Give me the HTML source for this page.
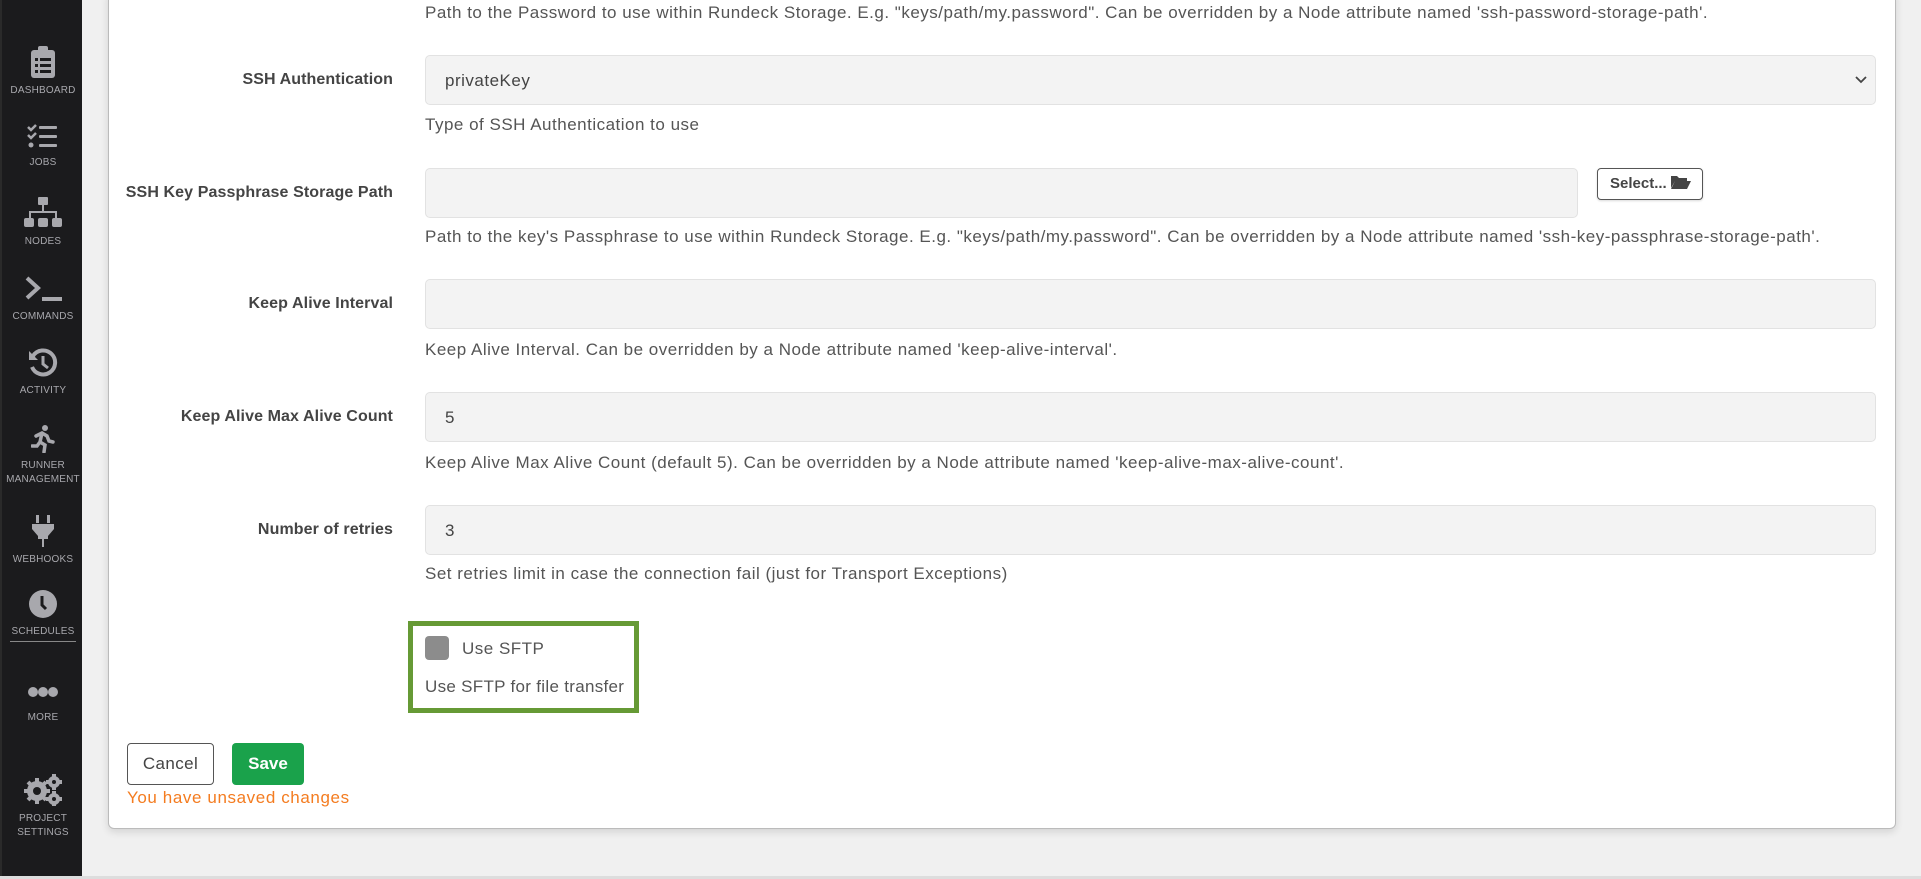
<!DOCTYPE html>
<html><head><meta charset="utf-8"><style>
*{box-sizing:border-box;margin:0;padding:0}
body{width:1921px;height:879px;background:#f0f0f0;font-family:"Liberation Sans",sans-serif;position:relative;overflow:hidden;color:#555}
#sb{position:absolute;left:0;top:0;width:82px;height:879px;background:#1b1b1d;border-left:2px solid #2a2a2a}
.it{position:absolute;left:0;width:82px;text-align:center;color:#a8a8ad;font-size:10px;line-height:14px;letter-spacing:.2px}
.it svg{display:block;margin:0 auto 6px}
#card{position:absolute;left:108px;top:-10px;width:1788px;height:839px;background:#fff;border:1px solid #bbb;border-radius:6px;box-shadow:0 3px 8px rgba(0,0,0,.12)}
.lbl{position:absolute;right:1528px;font-weight:bold;font-size:16px;color:#444;white-space:nowrap;letter-spacing:.1px}
.in{position:absolute;left:425px;width:1451px;height:50px;background:#f3f3f3;border:1px solid #e2e2e2;border-radius:5px;font-size:17px;color:#444;padding:15px 0 0 19px;letter-spacing:.5px}
.d{position:absolute;left:425px;font-size:17px;color:#555;white-space:nowrap;letter-spacing:.5px}
#bot{position:absolute;left:0;top:876px;width:1921px;height:3px;background:#ddd}
</style></head><body>
<div id="sb">
 <div class="it" style="top:46px"><svg width="26" height="32" viewBox="0 0 26 32"><rect x="1" y="4" width="24" height="28" rx="3" fill="#a8a8ad"/><rect x="8" y="0" width="10" height="7" rx="2" fill="#a8a8ad"/><g fill="#1b1b1d"><rect x="5" y="12" width="3" height="3"/><rect x="10" y="12" width="11" height="3"/><rect x="5" y="18" width="3" height="3"/><rect x="10" y="18" width="11" height="3"/><rect x="5" y="24" width="3" height="3"/><rect x="10" y="24" width="11" height="3"/></g></svg>DASHBOARD</div>
 <div class="it" style="top:124px"><svg width="32" height="26" viewBox="0 0 32 26"><g fill="none" stroke="#a8a8ad" stroke-width="2.5"><path d="M1 3l3 3 5-5M1 11l3 3 5-5"/></g><circle cx="4" cy="21" r="2.5" fill="#a8a8ad"/><g fill="#a8a8ad"><rect x="12" y="2" width="18" height="3" rx="1"/><rect x="12" y="11" width="18" height="3" rx="1"/><rect x="12" y="20" width="18" height="3" rx="1"/></g></svg>JOBS</div>
 <div class="it" style="top:197px"><svg width="38" height="32" viewBox="0 0 38 32"><g fill="#a8a8ad"><rect x="14" y="0" width="10" height="8" rx="1"/><rect x="18" y="8" width="2" height="8"/><rect x="5" y="14" width="28" height="2"/><rect x="5" y="14" width="2" height="8"/><rect x="31" y="14" width="2" height="8"/><rect x="0" y="21" width="10" height="9" rx="2"/><rect x="14" y="21" width="10" height="9" rx="2"/><rect x="28" y="21" width="10" height="9" rx="2"/></g></svg>NODES</div>
 <div class="it" style="top:276px"><svg width="38" height="28" viewBox="0 0 38 28"><path d="M3 2l11 10L3 22" fill="none" stroke="#a8a8ad" stroke-width="4"/><rect x="18" y="21" width="20" height="4" fill="#a8a8ad"/></svg>COMMANDS</div>
 <div class="it" style="top:348px"><svg width="30" height="30" viewBox="0 0 30 30"><path d="M5 8A12 12 0 1 1 4 19" fill="none" stroke="#a8a8ad" stroke-width="4"/><path d="M1 3v9h9z" fill="#a8a8ad"/><path d="M15 8v8l5 4" fill="none" stroke="#a8a8ad" stroke-width="3"/></svg>ACTIVITY</div>
 <div class="it" style="top:425px"><svg width="24" height="28" viewBox="0 0 24 28"><circle cx="14" cy="3" r="3" fill="#a8a8ad"/><path d="M5 11l6-3 5 3 2 5 4 1M11 8l-2 9 5 3-1 7M9 17l-3 4H1" fill="none" stroke="#a8a8ad" stroke-width="3.5" stroke-linecap="round"/></svg>RUNNER<br>MANAGEMENT</div>
 <div class="it" style="top:515px"><svg width="22" height="32" viewBox="0 0 22 32"><g fill="#a8a8ad"><rect x="4" y="0" width="3" height="8"/><rect x="15" y="0" width="3" height="8"/><path d="M0 9h22v5l-6 7v3h-4v8h-2v-8H6v-3L0 14z"/></g></svg>WEBHOOKS</div>
 <div class="it" style="top:589px"><svg width="30" height="30" viewBox="0 0 30 30"><circle cx="15" cy="15" r="14" fill="#a8a8ad"/><path d="M14 7v9l4 4" fill="none" stroke="#1b1b1d" stroke-width="3"/></svg><span style="display:inline-block;border-bottom:1px solid #888;padding:0 2px 2px">SCHEDULES</span></div>
 <div class="it" style="top:685px"><svg width="30" height="14" viewBox="0 0 30 14"><circle cx="5" cy="7" r="5" fill="#a8a8ad"/><circle cx="15" cy="7" r="5" fill="#a8a8ad"/><circle cx="25" cy="7" r="5" fill="#a8a8ad"/></svg><div style="margin-top:12px">MORE</div></div>
 <div class="it" style="top:774px"><svg width="38" height="32" viewBox="0 0 38 32"><g fill="#a8a8ad"><circle cx="13" cy="17" r="10"/><circle cx="30" cy="8" r="6"/><circle cx="30" cy="25" r="6"/></g><g stroke="#a8a8ad" stroke-width="4"><path d="M13 4v26M0 17h26M4 8l18 18M22 8L4 26"/><path d="M30 0v16M22 8h16M30 17v16M22 25h16"/></g><g fill="#1b1b1d"><circle cx="13" cy="17" r="4"/><circle cx="30" cy="8" r="2"/><circle cx="30" cy="25" r="2"/></g></svg>PROJECT<br>SETTINGS</div>
</div>
<div id="card"></div>
<div class="d" style="top:3px">Path to the Password to use within Rundeck Storage. E.g. "keys/path/my.password". Can be overridden by a Node attribute named 'ssh-password-storage-path'.</div>
<div class="lbl" style="top:71px">SSH Authentication</div>
<div class="in" style="top:55px">privateKey<svg style="position:absolute;right:8px;top:20px" width="12" height="8" viewBox="0 0 12 8"><path d="M1 1l5 5 5-5" fill="none" stroke="#444" stroke-width="1.8"/></svg></div>
<div class="d" style="top:115px">Type of SSH Authentication to use</div>
<div class="lbl" style="top:184px">SSH Key Passphrase Storage Path</div>
<div class="in" style="top:168px;width:1153px"></div>
<div style="position:absolute;left:1597px;top:168px;width:106px;height:32px;border:1px solid #555;border-radius:4px;background:#fff;font-size:15px;font-weight:bold;color:#444;padding:6px 0 0 12px;box-shadow:0 1px 2px rgba(0,0,0,.15)">Select... <svg width="20" height="14" viewBox="0 0 20 14" style="vertical-align:-1px"><path d="M0 1h6l2 2h8v3H4L0 13z M4 6h16l-4 8H0z" fill="#444"/></svg></div>
<div class="d" style="top:227px">Path to the key's Passphrase to use within Rundeck Storage. E.g. "keys/path/my.password". Can be overridden by a Node attribute named 'ssh-key-passphrase-storage-path'.</div>
<div class="lbl" style="top:295px">Keep Alive Interval</div>
<div class="in" style="top:279px"></div>
<div class="d" style="top:340px">Keep Alive Interval. Can be overridden by a Node attribute named 'keep-alive-interval'.</div>
<div class="lbl" style="top:408px">Keep Alive Max Alive Count</div>
<div class="in" style="top:392px">5</div>
<div class="d" style="top:453px">Keep Alive Max Alive Count (default 5). Can be overridden by a Node attribute named 'keep-alive-max-alive-count'.</div>
<div class="lbl" style="top:521px">Number of retries</div>
<div class="in" style="top:505px">3</div>
<div class="d" style="top:564px">Set retries limit in case the connection fail (just for Transport Exceptions)</div>
<div style="position:absolute;left:408px;top:621px;width:231px;height:92px;border:5px solid #669a35"></div>
<div style="position:absolute;left:425px;top:636px;width:24px;height:24px;border-radius:4px;background:#8c8c8c"></div>
<div class="d" style="left:462px;top:639px">Use SFTP</div>
<div class="d" style="top:677px;letter-spacing:.3px">Use SFTP for file transfer</div>
<div style="position:absolute;left:127px;top:743px;width:87px;height:42px;border:1px solid #555;border-radius:4px;background:#fff;font-size:17px;color:#444;text-align:center;line-height:40px;letter-spacing:.4px">Cancel</div>
<div style="position:absolute;left:232px;top:743px;width:72px;height:42px;border-radius:4px;background:#1aa24b;font-size:17px;font-weight:bold;color:#fff;text-align:center;line-height:42px">Save</div>
<div style="position:absolute;left:127px;top:788px;font-size:17px;color:#f47c20;letter-spacing:.6px">You have unsaved changes</div>
<div id="bot"></div>
</body></html>
